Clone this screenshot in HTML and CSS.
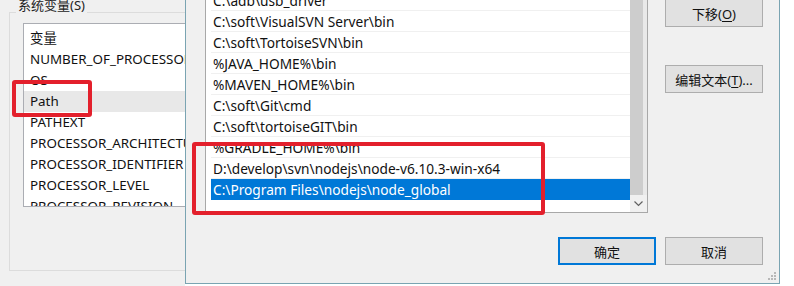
FILE: index.html
```html
<!DOCTYPE html>
<html lang="zh-CN">

<head>
    <meta charset="UTF-8" />
    <meta name="viewport" content="width=device-width, initial-scale=1.0" />
    <title>编辑环境变量</title>
    <link rel="stylesheet" href="styles.css">
</head>

<body>
    <div class="screen">
        <!-- system properties window behind -->
        <div class="behind">
            <div class="group">
                <span class="group-label">系统变量(S)</span>
                <div class="var-list">
                    <div class="var-row">变量</div>
                    <div class="var-row">NUMBER_OF_PROCESSORS</div>
                    <div class="var-row">OS</div>
                    <div class="var-row selected">Path</div>
                    <div class="var-row">PATHEXT</div>
                    <div class="var-row">PROCESSOR_ARCHITECTURE</div>
                    <div class="var-row">PROCESSOR_IDENTIFIER</div>
                    <div class="var-row">PROCESSOR_LEVEL</div>
                    <div class="var-row">PROCESSOR_REVISION</div>
                </div>
            </div>
        </div>

        <!-- edit environment variable dialog -->
        <div class="dialog">
            <div class="dialog-top">
                <div class="path-list">
                    <div class="path-rows">
                        <div class="path-row">C:\adb\usb_driver</div>
                        <div class="path-row">C:\soft\VisualSVN Server\bin</div>
                        <div class="path-row">C:\soft\TortoiseSVN\bin</div>
                        <div class="path-row">%JAVA_HOME%\bin</div>
                        <div class="path-row">%MAVEN_HOME%\bin</div>
                        <div class="path-row">C:\soft\Git\cmd</div>
                        <div class="path-row">C:\soft\tortoiseGIT\bin</div>
                        <div class="path-row">%GRADLE_HOME%\bin</div>
                        <div class="path-row">D:\develop\svn\nodejs\node-v6.10.3-win-x64</div>
                        <div class="path-row active">C:\Program Files\nodejs\node_global</div>
                    </div>
                    <div class="scrollbar">
                        <div class="thumb"></div>
                        <svg class="arrow" width="17" height="17" viewBox="0 0 17 17">
                            <path d="M4.5 6.5 L8.5 10.5 L12.5 6.5" fill="none" stroke="#606060" stroke-width="1.2" />
                        </svg>
                    </div>
                </div>
                <div class="side-buttons">
                    <button class="btn move-down">下移(<u>O</u>)</button>
                    <button class="btn edit-text">编辑文本(<u>T</u>)...</button>
                </div>
            </div>
            <div class="dialog-bottom">
                <button class="btn primary">确定</button>
                <button class="btn">取消</button>
            </div>
            <svg class="grip" width="10" height="10" viewBox="0 0 10 10">
                <rect x="7" y="1" width="2" height="2" fill="#b8b8b8" />
                <rect x="4" y="4" width="2" height="2" fill="#b8b8b8" />
                <rect x="7" y="4" width="2" height="2" fill="#b8b8b8" />
                <rect x="1" y="7" width="2" height="2" fill="#b8b8b8" />
                <rect x="4" y="7" width="2" height="2" fill="#b8b8b8" />
                <rect x="7" y="7" width="2" height="2" fill="#b8b8b8" />
            </svg>
        </div>

        <!-- red annotation boxes -->
        <div class="mark mark-path"></div>
        <div class="mark mark-node"></div>
    </div>
</body>

</html>
```
FILE: styles.css
```css
body {
    margin: 0;
    background-color: #fff;
    font-family: "Noto Sans", "Noto Sans CJK SC", sans-serif;
    font-size: 13px;
    color: #111;
}

.screen {
    position: relative;
    display: flex;
    width: 794px;
    height: 286px;
    overflow: hidden;
}

/* window behind */
.behind {
    width: 185px;
    height: 286px;
    flex-shrink: 0;
    background-color: #f0f0f0;
    overflow: hidden;
}

.group {
    position: relative;
    box-sizing: border-box;
    width: 320px;
    height: 259px;
    margin: 12px 0 0 9px;
    border: 1px solid #dcdcdc;
    padding: 10px 0 0 13px;
}

.group-label {
    position: absolute;
    top: -19px;
    left: 6px;
    padding: 0 2px;
    background-color: #f0f0f0;
    color: #222;
    line-height: 22px;
}

.var-list {
    box-sizing: border-box;
    height: 184px;
    padding-top: 4px;
    background-color: #fff;
    border: 1px solid #abadb3;
    overflow: hidden;
    font-size: 13.4px;
}

.var-row {
    height: 21px;
    line-height: 21px;
    padding-left: 6px;
    white-space: nowrap;
}

.var-row.selected {
    background-color: #e8e8e8;
}

/* dialog */
.dialog {
    position: relative;
    box-sizing: border-box;
    width: 595px;
    height: 284px;
    flex-shrink: 0;
    background-color: #f0f0f0;
    border: 1px solid #7aa4b2;
    border-top: none;
}

.dialog-top {
    display: flex;
    align-items: flex-start;
}

.path-list {
    display: flex;
    box-sizing: border-box;
    width: 443px;
    height: 213px;
    margin-left: 19px;
    background-color: #fff;
    border: 1px solid #a8a8a8;
    border-top: none;
    overflow: hidden;
}

.path-rows {
    flex: 1;
    margin-top: -10px;
    padding-left: 5px;
    font-size: 13.7px;
}

.path-row {
    box-sizing: border-box;
    height: 21px;
    line-height: 20px;
    padding: 1px 0 0 2px;
    border-bottom: 1px solid #f0f0f0;
    white-space: nowrap;
}

.path-row.active {
    background-color: #0078d7;
    border-bottom-color: #0078d7;
    color: #fff;
}

.scrollbar {
    display: flex;
    flex-direction: column;
    width: 17px;
    background-color: #e9e9e9;
}

.thumb {
    flex: 1;
    margin-right: 4px;
    background-color: #cdcdcd;
}

.arrow {
    display: block;
    background-color: #f0f0f0;
}

.side-buttons {
    display: flex;
    flex-direction: column;
    margin-left: 17px;
}

.btn {
    box-sizing: border-box;
    width: 98px;
    height: 28px;
    padding: 0;
    background-color: #e1e1e1;
    border: 1px solid #adadad;
    font-family: "Noto Sans", "Noto Sans CJK SC", sans-serif;
    font-size: 13px;
    color: #111;
}

.btn u {
    text-underline-offset: 2px;
}

.move-down {
    margin-top: -1px;
}

.edit-text {
    margin-top: 38px;
}

.dialog-bottom {
    display: flex;
    justify-content: flex-end;
    gap: 9px;
    margin-top: 24px;
    padding-right: 16px;
}

.btn.primary {
    border-color: #0078d7;
    box-shadow: inset 0 0 0 1px #0078d7;
}

.grip {
    position: absolute;
    right: 2px;
    bottom: 2px;
}

/* red annotation boxes */
.mark {
    position: absolute;
    box-sizing: border-box;
    border: 4px solid #e3202c;
    border-radius: 3px;
}

.mark-path {
    left: 12px;
    top: 80px;
    width: 80px;
    height: 37px;
}

.mark-node {
    left: 192px;
    top: 142px;
    width: 353px;
    height: 73px;
}
```
